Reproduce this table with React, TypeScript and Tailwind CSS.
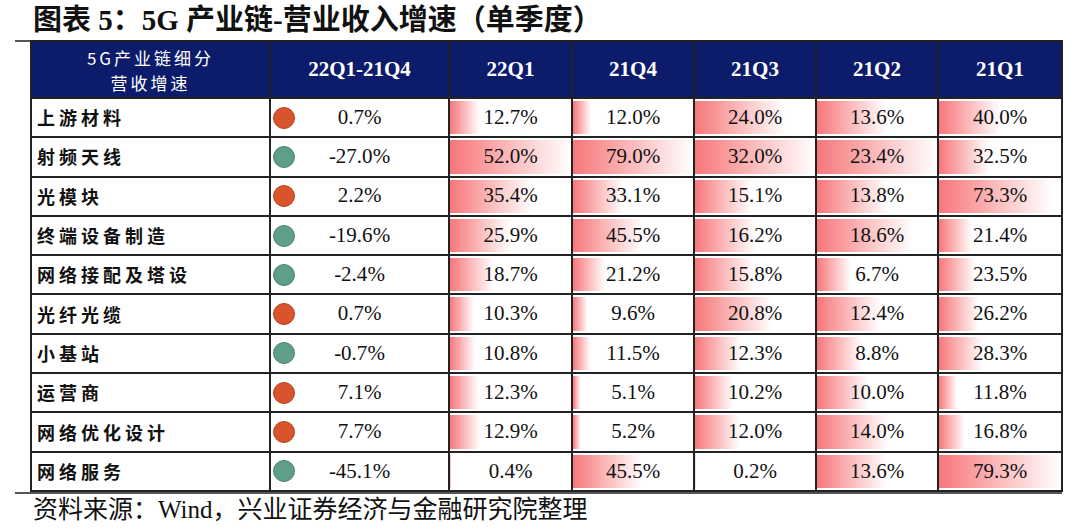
type Row = {
  name: string;
  yoy: number;
  vals: number[];
};

const rows: Row[] = [
  { name: "上游材料", yoy: 0.7, vals: [12.7, 12.0, 24.0, 13.6, 40.0] },
  { name: "射频天线", yoy: -27.0, vals: [52.0, 79.0, 32.0, 23.4, 32.5] },
  { name: "光模块", yoy: 2.2, vals: [35.4, 33.1, 15.1, 13.8, 73.3] },
  { name: "终端设备制造", yoy: -19.6, vals: [25.9, 45.5, 16.2, 18.6, 21.4] },
  { name: "网络接配及塔设", yoy: -2.4, vals: [18.7, 21.2, 15.8, 6.7, 23.5] },
  { name: "光纤光缆", yoy: 0.7, vals: [10.3, 9.6, 20.8, 12.4, 26.2] },
  { name: "小基站", yoy: -0.7, vals: [10.8, 11.5, 12.3, 8.8, 28.3] },
  { name: "运营商", yoy: 7.1, vals: [12.3, 5.1, 10.2, 10.0, 11.8] },
  { name: "网络优化设计", yoy: 7.7, vals: [12.9, 5.2, 12.0, 14.0, 16.8] },
  { name: "网络服务", yoy: -45.1, vals: [0.4, 45.5, 0.2, 13.6, 79.3] },
];

const quarters = ["22Q1", "21Q4", "21Q3", "21Q2", "21Q1"];

// each data-bar column is scaled to its own max
const maxes = quarters.map((_, i) => Math.max(...rows.map((r) => r.vals[i])));

const serif = "font-['Liberation_Serif','Noto_Sans_CJK_SC',serif]";
const cjk = "font-['Noto_Sans_CJK_SC','Liberation_Sans',sans-serif]";

export default function App() {
  return (
    <div className="w-[1080px] h-[532px] bg-white overflow-hidden text-[#111]">
      {/* TITLE */}
      <div className={`h-[40px] pl-[33px] pt-[4px] text-[29px] leading-[32px] font-bold ${serif}`}>
        图表 5：5G 产业链-营业收入增速（单季度）
      </div>

      {/* TABLE */}
      <div className="ml-[15px] w-[1047px] border-t-2 border-b-2 border-[#555]">
        <table className="ml-[15px] border-collapse table-fixed w-[1031px] -mt-[2px]">
          <colgroup>
            <col className="w-[239px]" />
            <col className="w-[179px]" />
            <col className="w-[123px]" />
            <col className="w-[122px]" />
            <col className="w-[122px]" />
            <col className="w-[122px]" />
            <col className="w-[124px]" />
          </colgroup>
          <thead>
            <tr className="h-[57px] bg-[#0c1c6b] text-white">
              <th className={`border-2 border-[#222] text-[17px] leading-[25px] font-normal tracking-[3px] ${cjk}`}>
                <div>5G产业链细分</div>
                <div>营收增速</div>
              </th>
              <th className={`border-2 border-[#222] text-[21px] font-bold ${serif}`}>22Q1-21Q4</th>
              {quarters.map((q) => (
                <th key={q} className={`border-2 border-[#222] text-[21px] font-bold ${serif}`}>
                  {q}
                </th>
              ))}
            </tr>
          </thead>
          <tbody>
            {rows.map((r) => (
              <tr key={r.name} className="h-[39.3px]">
                <td className={`border-2 border-[#222] pl-[5px] text-[18px] font-bold tracking-[4px] ${cjk}`}>
                  {r.name}
                </td>
                <td className="border-2 border-[#222] p-0">
                  <div className="grid grid-cols-[28px_1fr_28px] items-center">
                    <span
                      className={
                        r.yoy >= 0
                          ? "ml-[2px] w-[22px] h-[22px] rounded-full bg-[#d9532c] border border-[#b8431f]"
                          : "ml-[2px] w-[22px] h-[22px] rounded-full bg-[#5f9e8b] border border-[#4b8272]"
                      }
                    />
                    <span className={`text-center text-[21px] ${serif}`}>{r.yoy.toFixed(1)}%</span>
                    <span />
                  </div>
                </td>
                {r.vals.map((v, i) => (
                  <td
                    key={i}
                    className={`border-2 border-[#222] text-center text-[21px] ${serif}`}
                    style={{
                      backgroundImage: "linear-gradient(to right, #f7777a, #ffffff)",
                      backgroundSize: `${(v / maxes[i]) * 100}% calc(100% - 4px)`,
                      backgroundPosition: "left center",
                      backgroundRepeat: "no-repeat",
                    }}
                  >
                    {v.toFixed(1)}%
                  </td>
                ))}
              </tr>
            ))}
          </tbody>
        </table>
      </div>

      {/* SOURCE */}
      <div className={`pl-[33px] pt-[1px] text-[25px] leading-[30px] ${serif}`}>
        资料来源：Wind，兴业证券经济与金融研究院整理
      </div>
    </div>
  );
}
